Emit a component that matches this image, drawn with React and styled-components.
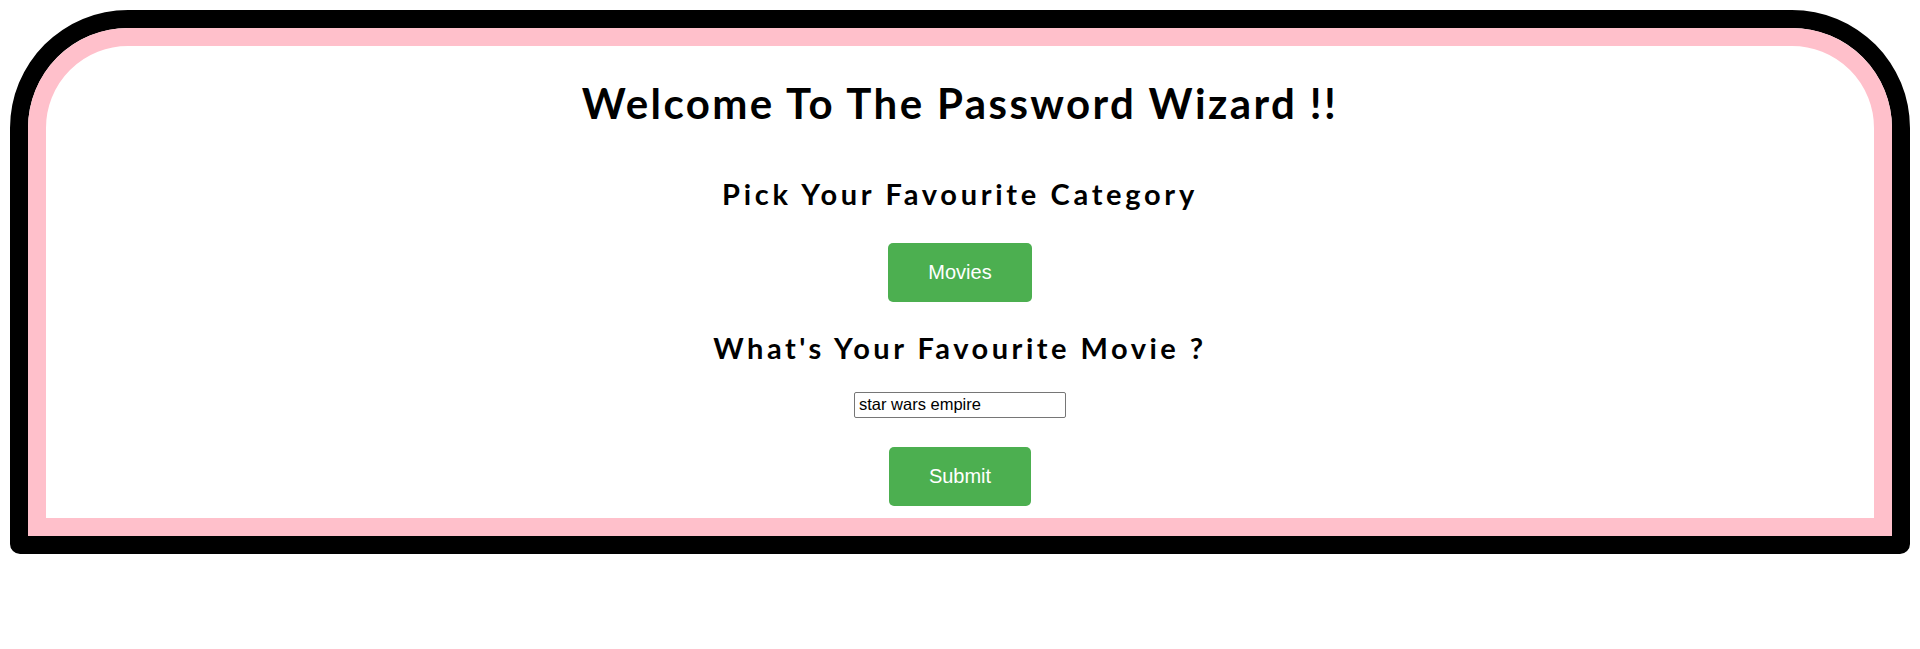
import React from 'react';
import styled, { createGlobalStyle } from 'styled-components';

const GlobalStyle = createGlobalStyle`
  body {
    margin: 0;
    background: #ffffff;
  }
`;

const Frame = styled.div`
  margin: 10px;
  border: 18px solid #000000;
  border-radius: 118px 118px 10px 10px;
`;

const Card = styled.div`
  display: flex;
  flex-direction: column;
  align-items: center;
  border: 18px solid #ffc0cb;
  border-radius: 100px 100px 0 0;
  background: #ffffff;
  padding: 32px 0 12px;
`;

const Title = styled.h1`
  margin: 0;
  font-family: Lato, "DejaVu Sans", sans-serif;
  font-size: 42px;
  font-weight: 700;
  line-height: 1.2;
  letter-spacing: 2.4px;
  color: #000000;
`;

const Heading = styled.h2`
  margin: ${(p) => p.$top}px 0 0;
  font-family: Lato, "DejaVu Sans", sans-serif;
  font-size: 29px;
  font-weight: 700;
  line-height: 1.2;
  letter-spacing: ${(p) => p.$spacing}px;
  color: #000000;
`;

const Button = styled.button`
  margin-top: ${(p) => p.$top}px;
  padding: 18px 40px;
  border: none;
  border-radius: 5px;
  background-color: #4caf50;
  color: #ffffff;
  font-family: "Liberation Sans", Arial, sans-serif;
  font-size: 20px;
  line-height: 23px;
  cursor: pointer;
`;

const TextInput = styled.input`
  margin-top: 26px;
  box-sizing: border-box;
  width: 212px;
  height: 26px;
  padding: 0 4px;
  border: 1px solid #767676;
  border-radius: 2px;
  font-family: "Liberation Sans", Arial, sans-serif;
  font-size: 16.5px;
  color: #000000;
`;

const App = () => {
  return (
    <>
      <GlobalStyle />
      <Frame>
        <Card>
          <Title>Welcome To The Password Wizard !!</Title>
          <Heading $top={49} $spacing={3.7}>Pick Your Favourite Category</Heading>
          <Button $top={31}>Movies</Button>
          <Heading $top={29} $spacing={3.5}>What's Your Favourite Movie ?</Heading>
          <TextInput type="text" defaultValue="star wars empire" />
          <Button $top={29}>Submit</Button>
        </Card>
      </Frame>
    </>
  );
};

export default App;
